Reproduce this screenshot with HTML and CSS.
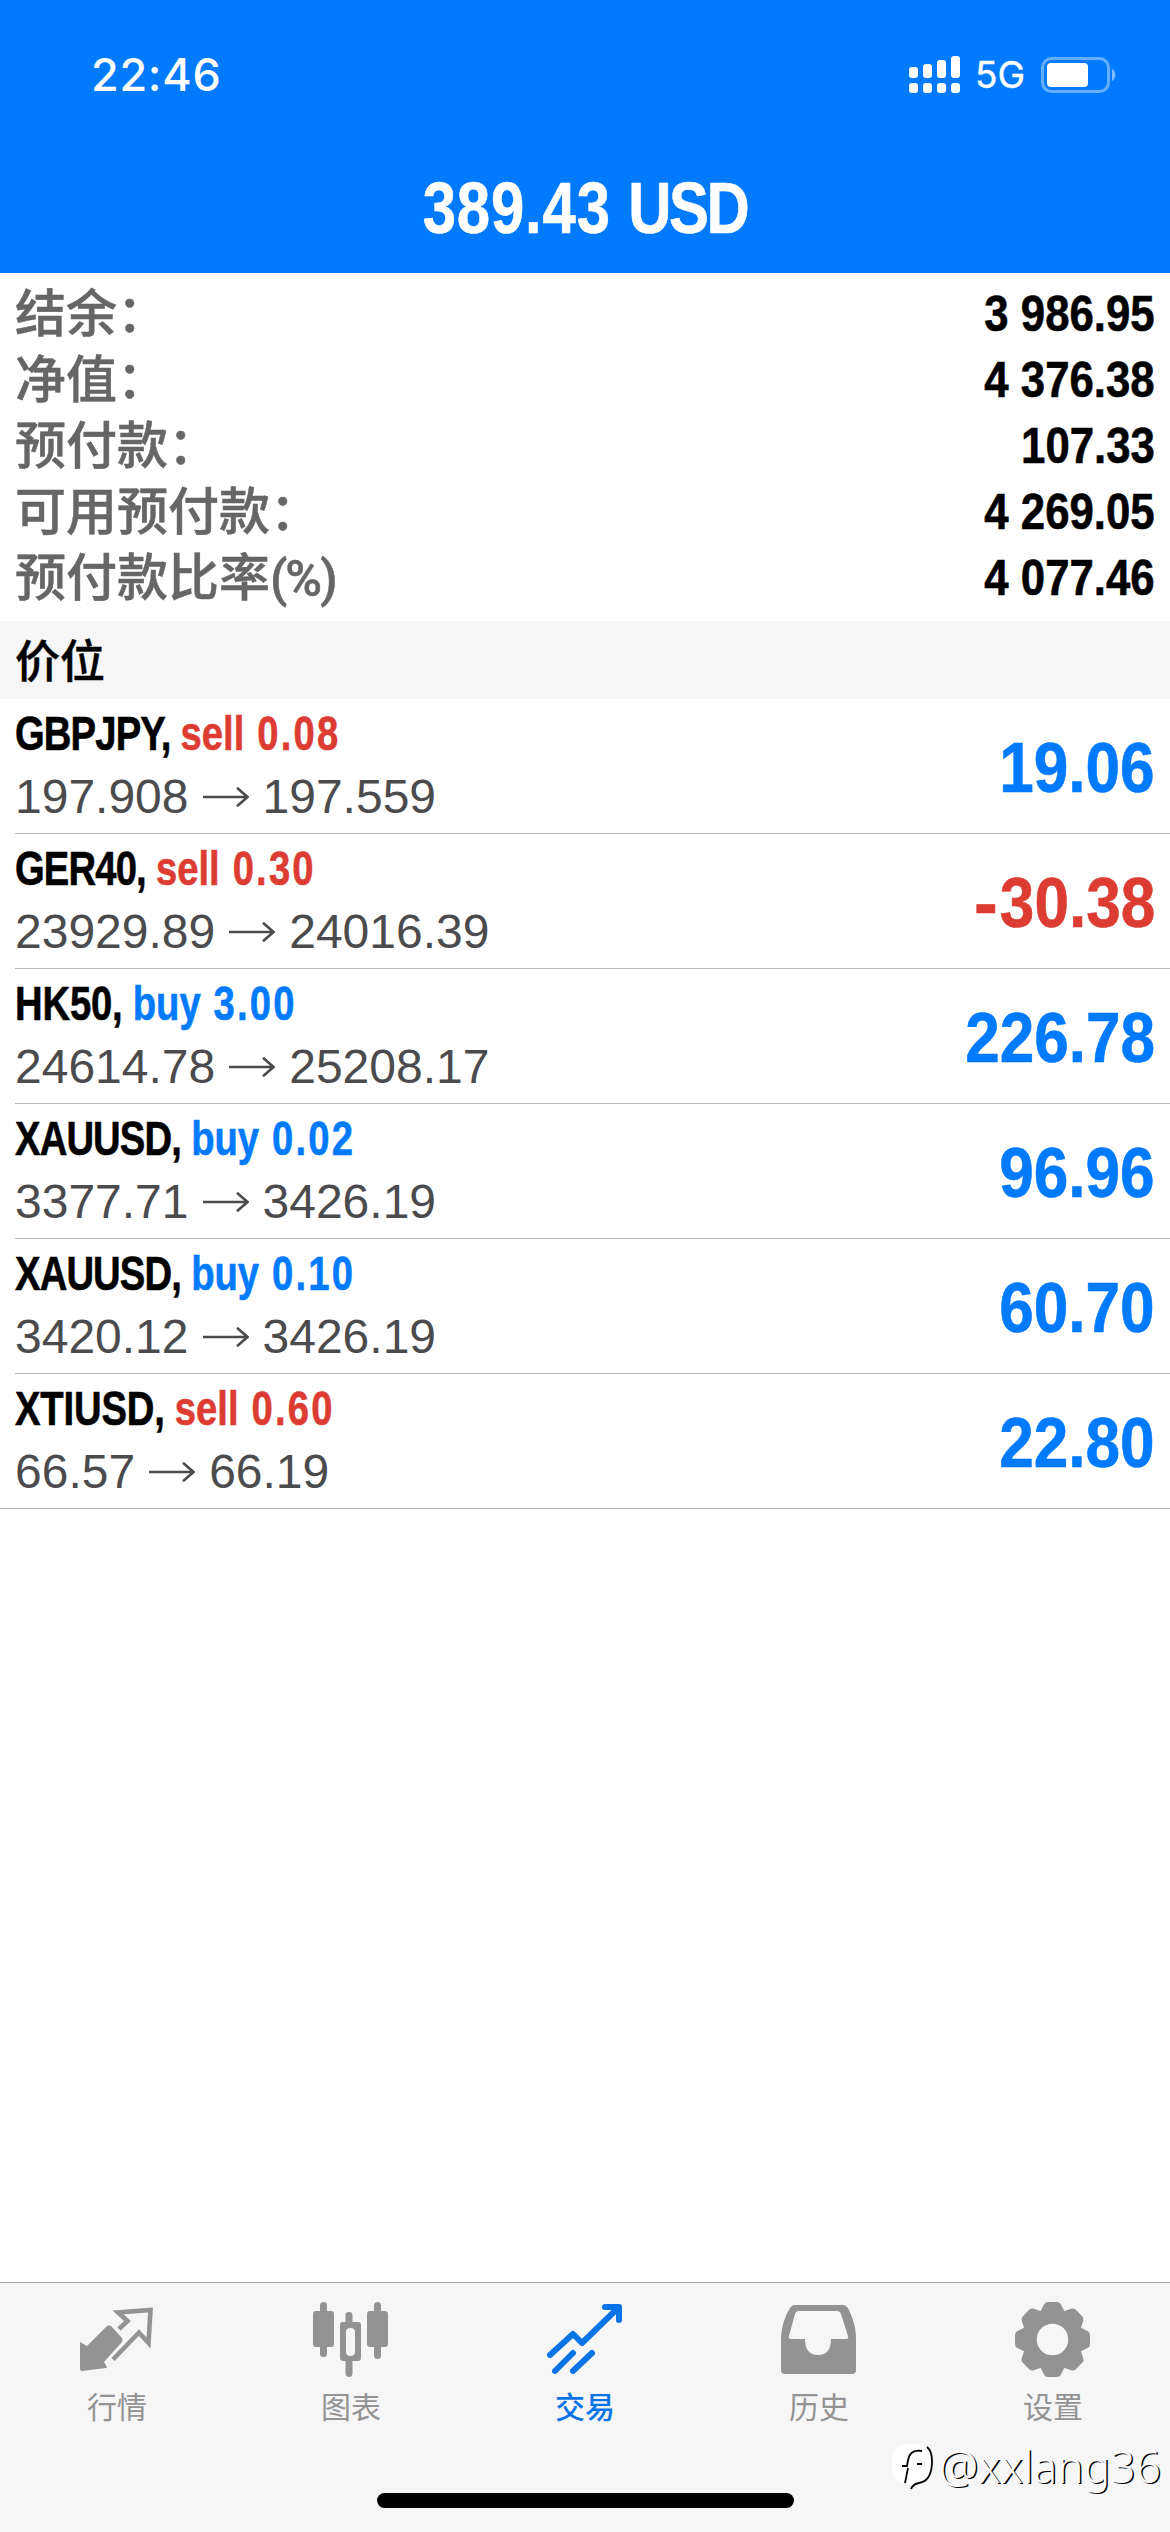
FILE: index.html
```html
<!DOCTYPE html>
<html lang="zh-CN">
<head>
<meta charset="utf-8">
<title>交易</title>
<link rel="stylesheet" href="styles.css">
</head>
<body>
<div class="app">
  <header class="header">
    <div class="status">
      <span class="clock">22:46</span>
      <div class="status-icons">
        <svg class="signal" width="54" height="38" viewBox="0 0 54 38" fill="#fff">
          <rect x="1" y="11" width="9" height="11" rx="3"/><rect x="15" y="8" width="9" height="14" rx="3"/><rect x="29" y="4" width="9" height="18" rx="3"/><rect x="43" y="0" width="9" height="22" rx="3"/>
          <rect x="1" y="27" width="9" height="10" rx="3"/><rect x="15" y="27" width="9" height="10" rx="3"/><rect x="29" y="27" width="9" height="10" rx="3"/><rect x="43" y="27" width="9" height="10" rx="3"/>
        </svg>
        <span class="network">5G</span>
        <svg class="battery" width="76" height="36" viewBox="0 0 76 36">
          <rect x="1.5" y="1.5" width="66" height="33" rx="9" fill="none" stroke="#fff" stroke-opacity=".4" stroke-width="3"/>
          <rect x="6" y="6" width="41" height="24" rx="4" fill="#fff"/>
          <path d="M71 12a7 7 0 0 1 0 12z" fill="#fff" fill-opacity=".5"/>
        </svg>
      </div>
    </div>
    <h1 class="total">389.43 <span class="caps">USD</span></h1>
  </header>

  <dl class="summary">
    <div class="line"><dt>结余：</dt><dd>3 986.95</dd></div>
    <div class="line"><dt>净值：</dt><dd>4 376.38</dd></div>
    <div class="line"><dt>预付款：</dt><dd>107.33</dd></div>
    <div class="line"><dt>可用预付款：</dt><dd>4 269.05</dd></div>
    <div class="line"><dt>预付款比率<span class="unit">(%)</span></dt><dd>4 077.46</dd></div>
  </dl>

  <h2 class="section">价位</h2>

  <ul class="positions">
    <li class="position"><div class="info"><p class="title"><span class="symbol">GBPJPY,</span><span class="side sell">sell <b>0.08</b></span></p><p class="prices">197.908<svg class="arrow" viewBox="0 0 46 20"><path d="M0 10H44M34 0.8L44.5 10 34 19.2"/></svg>197.559</p></div><span class="profit up">19.06</span></li>
    <li class="position"><div class="info"><p class="title"><span class="symbol">GER40,</span><span class="side sell">sell <b>0.30</b></span></p><p class="prices">23929.89<svg class="arrow" viewBox="0 0 46 20"><path d="M0 10H44M34 0.8L44.5 10 34 19.2"/></svg>24016.39</p></div><span class="profit down"><span class="minus">-</span>30.38</span></li>
    <li class="position"><div class="info"><p class="title"><span class="symbol loose">HK50,</span><span class="side buy">buy <b>3.00</b></span></p><p class="prices">24614.78<svg class="arrow" viewBox="0 0 46 20"><path d="M0 10H44M34 0.8L44.5 10 34 19.2"/></svg>25208.17</p></div><span class="profit up">226.78</span></li>
    <li class="position"><div class="info"><p class="title"><span class="symbol">XAUUSD,</span><span class="side buy">buy <b>0.02</b></span></p><p class="prices">3377.71<svg class="arrow" viewBox="0 0 46 20"><path d="M0 10H44M34 0.8L44.5 10 34 19.2"/></svg>3426.19</p></div><span class="profit up">96.96</span></li>
    <li class="position"><div class="info"><p class="title"><span class="symbol">XAUUSD,</span><span class="side buy">buy <b>0.10</b></span></p><p class="prices">3420.12<svg class="arrow" viewBox="0 0 46 20"><path d="M0 10H44M34 0.8L44.5 10 34 19.2"/></svg>3426.19</p></div><span class="profit up">60.70</span></li>
    <li class="position"><div class="info"><p class="title"><span class="symbol loose">XTIUSD,</span><span class="side sell">sell <b>0.60</b></span></p><p class="prices">66.57<svg class="arrow" viewBox="0 0 46 20"><path d="M0 10H44M34 0.8L44.5 10 34 19.2"/></svg>66.19</p></div><span class="profit up">22.80</span></li>
  </ul>

  <nav class="tabs">
    <a class="tab">
      <svg class="icon" viewBox="0 0 84 84">
        <path fill="currentColor" d="M5 44l7 4 20-20q2-1 4 0l11 12q1 2 0 4L29 64l3 5-1 1-24 3q-2 0-2-2z"/>
        <path fill="none" stroke="currentColor" stroke-width="4.600" d="M44 31l8.500-8-9.500-8.500 32.500-2.500-2 33-9.500-10.500-26 27"/>
      </svg>
      <span>行情</span>
    </a>
    <a class="tab">
      <svg class="icon" viewBox="0 0 84 84" fill="currentColor">
        <rect x="4" y="13" width="21" height="36" rx="3"/><rect x="11" y="4" width="7" height="55" rx="3.500"/>
        <rect x="58" y="13" width="21" height="36" rx="3"/><rect x="65" y="4" width="7" height="57" rx="3.500"/>
        <path fill-rule="evenodd" d="M34 24h2.500V17q0-3 3.500-3t3.500 3v7H49q3 0 3 3v33q0 3-3 3h-5.500v12q0 4-3.500 4t-3.500-4V63H34q-3 0-3-3V27q0-3 3-3zM41.500 30q-4.500 0-4.500 4v20q0 4 4.500 4t4.500-4V34q0-4-4.500-4z"/>
      </svg>
      <span>图表</span>
    </a>
    <a class="tab active">
      <svg class="icon" viewBox="0 0 84 84" fill="none" stroke="currentColor" stroke-width="6" stroke-linecap="round" stroke-linejoin="round">
        <path d="M7 57L30 36 39 45 75 10M62 9H76V22M12 73L30 55M30 73L49 55"/>
      </svg>
      <span>交易</span>
    </a>
    <a class="tab">
      <svg class="icon" viewBox="0 0 84 84">
        <path fill="currentColor" fill-rule="evenodd" d="M17 7H66q3 0 5 3q8 16 8 29V72q0 4-4 4H8q-4 0-4-4V39Q5 23 13 10q2-3 4-3zM22 13q-3 0-4 3L12 38q-1 3 2 3H28q0 16 13 16t13-16H69q3 0 2-3L64 16q-1-3-4-3z"/>
      </svg>
      <span>历史</span>
    </a>
    <a class="tab">
      <svg class="icon" viewBox="0 0 84 84" fill="currentColor">
        <defs><path id="tooth" d="M27.500 15l2-1.500 3.500-7q1-2.500 4-2.500h9q3 0 4 2.500l3.500 7 2 1.500z"/></defs>
        <use href="#tooth"/><use href="#tooth" transform="rotate(45 41.500 41.500)"/><use href="#tooth" transform="rotate(90 41.500 41.500)"/><use href="#tooth" transform="rotate(135 41.500 41.500)"/><use href="#tooth" transform="rotate(180 41.500 41.500)"/><use href="#tooth" transform="rotate(225 41.500 41.500)"/><use href="#tooth" transform="rotate(270 41.500 41.500)"/><use href="#tooth" transform="rotate(315 41.500 41.500)"/>
        <circle cx="41.500" cy="41.500" r="23" fill="none" stroke="currentColor" stroke-width="14.500"/>
      </svg>
      <span>设置</span>
    </a>
    <div class="home-bar"></div>
    <div class="credit">
      <svg width="48" height="50" viewBox="0 0 48 50">
        <rect x="1" y="3" width="40" height="41" rx="16" fill="#fff"/>
        <path d="M31 10q-12-2-14 9l-1 6h-5M17 27l-3 15M26 23h5M36 6q5 4 5 14 0 20-13 22-6 1-8 6" fill="none" stroke="#000" stroke-width="1.800"/>
      </svg>
      <span>@xxlang36</span>
    </div>
  </nav>
</div>
</body>
</html>
```

FILE: styles.css
```css
* { box-sizing: border-box; margin: 0; padding: 0; }

body {
  width: 1170px;
  background: #fff;
  font-family: "Liberation Sans", "Noto Sans CJK SC", sans-serif;
}

.app { display: flex; flex-direction: column; height: 2532px; }

.header { height: 273px; background: #007aff; color: #fff; }

.status {
  display: flex;
  justify-content: space-between;
  align-items: center;
  height: 150px;
  padding: 0 53px 0 91px;
}
.clock { font: 500 45px/60px Inter, sans-serif; letter-spacing: 0.7px; }
.status-icons { display: flex; align-items: center; }
.network { margin: 0 16px 0 13px; font: 400 37px/48px Inter, sans-serif; -webkit-text-stroke: 0.4px; }

/* Condensed bold figures */
.total, .summary dd, .title, .profit { font-weight: 700; -webkit-text-stroke: 0.6px; }
.total {
  height: 116px;
  text-align: center;
  font-size: 73px;
  line-height: 116px;
  letter-spacing: 1px;
  transform: scaleX(0.82);
}
.caps { letter-spacing: -3px; }

.summary { height: 348px; padding: 7px 15px 0; }
.line { display: flex; justify-content: space-between; height: 66px; }
.line dt {
  color: #666;
  font: 500 51px/60px "Noto Sans CJK SC", sans-serif;
  -webkit-text-stroke: 0.5px;
}
.unit { font-family: Roboto, sans-serif; font-size: 50px; letter-spacing: -2px; }
.line dd { font-size: 50px; line-height: 68px; transform: scaleX(0.875); transform-origin: right; }

.section {
  height: 78px;
  padding-left: 15px;
  background: #f6f6f6;
  font: 500 45px/76px "Noto Sans CJK SC", sans-serif;
  -webkit-text-stroke: 0.5px;
}

.positions { flex: 1; list-style: none; }
.position {
  display: flex;
  justify-content: space-between;
  align-items: center;
  height: 135px;
  margin-left: 15px;
  padding-right: 15px;
  border-bottom: 1px solid #b8b8bb;
}
.position:last-child { margin-left: 0; padding-left: 15px; }
.title {
  display: flex;
  gap: 13px;
  height: 62px;
  font-size: 49px;
  line-height: 59px;
  transform: scaleX(0.78);
  transform-origin: left;
}
.symbol { letter-spacing: -1.1px; }
.symbol.loose { letter-spacing: -0.2px; }
.side { word-spacing: 3px; }
.side b { letter-spacing: 2.800px; }
.prices { display: flex; align-items: center; height: 62px; color: #4b4b4e; font-size: 48px; line-height: 62px; }
.arrow { width: 46px; height: 20px; margin: 0 14px; fill: none; stroke: currentColor; stroke-width: 2.600; }
.profit { padding-top: 3px; font-size: 71px; transform: scaleX(0.875); transform-origin: right; }
.minus { display: inline-block; margin-right: 4px; transform: scaleX(1.15); }
.sell, .down { color: #dc3c32; }
.buy, .up { color: #007aff; }

.tabs {
  position: relative;
  display: flex;
  height: 250px;
  border-top: 1px solid #a9a9ab;
  background: #f6f6f6;
}
.tab {
  display: flex;
  flex: 1;
  flex-direction: column;
  align-items: center;
  padding-top: 15px;
  color: #939393;
  font: 400 30px/40px "Noto Sans CJK SC", sans-serif;
}
.tab.active { color: #0a74e6; font-weight: 500; }
.icon { width: 84px; height: 84px; margin-bottom: 3px; }
.home-bar {
  position: absolute;
  left: 377px;
  bottom: 24px;
  width: 417px;
  height: 15px;
  border-radius: 8px;
  background: #000;
}
.credit {
  position: absolute;
  right: 9px;
  bottom: 41px;
  display: flex;
  align-items: center;
  color: #fafafa;
  font: 300 44px/50px "Noto Sans", sans-serif;
  letter-spacing: 0.2px;
  text-shadow: 1.5px 1px 0 #000;
}
```
